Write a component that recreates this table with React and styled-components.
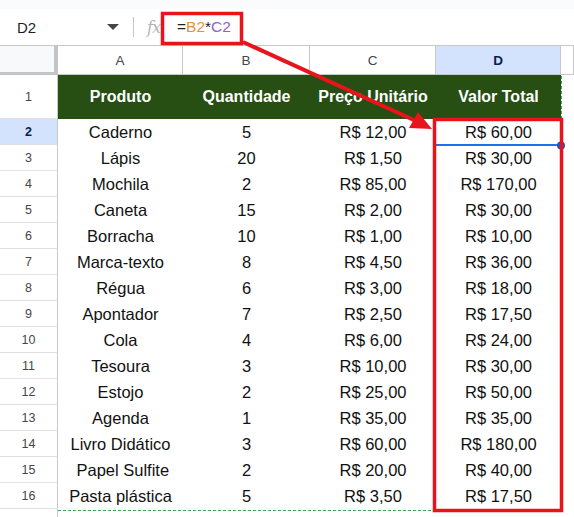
import React from "react";
import styled, { createGlobalStyle } from "styled-components";

const GlobalStyle = createGlobalStyle`
  html, body { margin: 0; padding: 0; background: #fff; }
  body { font-family: "Liberation Sans", Arial, sans-serif; overflow: hidden; }
`;

const rows = [
  ["Caderno", 5, "R$ 12,00", "R$ 60,00"],
  ["Lápis", 20, "R$ 1,50", "R$ 30,00"],
  ["Mochila", 2, "R$ 85,00", "R$ 170,00"],
  ["Caneta", 15, "R$ 2,00", "R$ 30,00"],
  ["Borracha", 10, "R$ 1,00", "R$ 10,00"],
  ["Marca-texto", 8, "R$ 4,50", "R$ 36,00"],
  ["Régua", 6, "R$ 3,00", "R$ 18,00"],
  ["Apontador", 7, "R$ 2,50", "R$ 17,50"],
  ["Cola", 4, "R$ 6,00", "R$ 24,00"],
  ["Tesoura", 3, "R$ 10,00", "R$ 30,00"],
  ["Estojo", 2, "R$ 25,00", "R$ 50,00"],
  ["Agenda", 1, "R$ 35,00", "R$ 35,00"],
  ["Livro Didático", 3, "R$ 60,00", "R$ 180,00"],
  [" Papel Sulfite", 2, "R$ 20,00", "R$ 40,00"],
  ["Pasta plástica", 5, "R$ 3,50", "R$ 17,50"],
];

const Page = styled.div`
  position: relative;
  width: 574px;
  height: 517px;
  overflow: hidden;
  background: #fff;
`;

const TopStrip = styled.div`
  height: 9px;
  background: #f9fbfd;
`;

const FormulaBar = styled.div`
  display: flex;
  align-items: center;
  height: 36px;
  border-bottom: 1px solid #c7c7c7;
  background: #fff;
`;

const NameBox = styled.div`
  width: 100px;
  padding-left: 17px;
  font-size: 15px;
  color: #1f1f1f;
`;

const Caret = styled.div`
  width: 0;
  height: 0;
  border-left: 6px solid transparent;
  border-right: 6px solid transparent;
  border-top: 6px solid #444746;
  margin-left: -10px;
`;

const Divider = styled.div`
  width: 1px;
  height: 20px;
  background: #c7c7c7;
  margin-left: 14px;
`;

const Fx = styled.div`
  margin-left: 13px;
  width: 16px;
  font-family: "DejaVu Serif", serif;
  font-style: italic;
  font-size: 16px;
  color: #b4b4b4;
  letter-spacing: -1px;
`;

const Formula = styled.div`
  margin-left: 14px;
  font-size: 15.5px;
  color: #1f1f1f;
`;

const Ref = styled.span`
  color: ${p => p.c};
`;

const Grid = styled.div`
  display: grid;
  grid-template-columns: 58px 125px 127px 126px 125px 1fr;
  align-items: start;
`;

const Corner = styled.div`
  height: 29px;
  background: #f8f9fa;
  border-right: 4px solid #c4c4c4;
  border-bottom: 3px solid #c4c4c4;
  box-sizing: border-box;
`;

const ColHead = styled.div`
  height: 29px;
  box-sizing: border-box;
  display: flex;
  align-items: center;
  justify-content: center;
  font-size: 13.5px;
  background: ${p => (p.active ? "#d3e3fd" : "#fff")};
  color: ${p => (p.active ? "#0b1f4a" : "#444746")};
  font-weight: ${p => (p.active ? "bold" : "normal")};
  border-right: 1px solid #c7c7c7;
  border-bottom: 1px solid #c7c7c7;
`;

const RowHead = styled.div`
  height: ${p => p.h || 26}px;
  box-sizing: border-box;
  display: flex;
  align-items: center;
  justify-content: center;
  font-size: 12.5px;
  background: ${p => (p.active ? "#d3e3fd" : "#fff")};
  color: ${p => (p.active ? "#0b1f4a" : "#444746")};
  font-weight: ${p => (p.active ? "bold" : "normal")};
  border-right: 1px solid #c7c7c7;
  border-bottom: 1px solid #e1e1e1;
`;

const HeadCell = styled.div`
  height: 44px;
  display: flex;
  align-items: center;
  justify-content: center;
  background: #274e13;
  color: #fff;
  font-weight: bold;
  font-size: 16px;
  white-space: nowrap;
`;

const Cell = styled.div`
  height: 26px;
  display: flex;
  align-items: center;
  justify-content: center;
  font-size: 16.5px;
  color: #111;
  white-space: pre;
`;

const Blank = styled.div`
  height: ${p => p.h || 26}px;
`;

const Overlay = styled.svg`
  position: absolute;
  left: 0;
  top: 0;
  pointer-events: none;
`;

export default function App() {
  return (
    <Page>
      <GlobalStyle />
      <TopStrip />
      <FormulaBar>
        <NameBox>D2</NameBox>
        <Caret />
        <Divider />
        <Fx>fx</Fx>
        <Formula>
          =<Ref c="#e69138">B2</Ref>*<Ref c="#8e63ce">C2</Ref>
        </Formula>
      </FormulaBar>
      <Grid>
        <Corner />
        <ColHead>A</ColHead>
        <ColHead>B</ColHead>
        <ColHead>C</ColHead>
        <ColHead active>D</ColHead>
        <ColHead />

        <RowHead h={44}>1</RowHead>
        <HeadCell>Produto</HeadCell>
        <HeadCell>Quantidade</HeadCell>
        <HeadCell>Preço Unitário</HeadCell>
        <HeadCell>Valor Total</HeadCell>
        <Blank h={44} />

        {rows.map((r, i) => (
          <React.Fragment key={i}>
            <RowHead active={i === 0}>{i + 2}</RowHead>
            <Cell>{r[0]}</Cell>
            <Cell>{r[1]}</Cell>
            <Cell>{r[2]}</Cell>
            <Cell>{r[3]}</Cell>
            <Blank />
          </React.Fragment>
        ))}
        <RowHead>17</RowHead>
      </Grid>

      <Overlay width="574" height="517">
        <polyline points="561.5,76 561.5,510.5 58,510.5" fill="none" stroke="#34a853" strokeDasharray="3 2" strokeWidth="1" />
        <line x1="436" y1="145" x2="560" y2="145" stroke="#1a73e8" strokeWidth="2" />
        <circle cx="561" cy="145.5" r="4" fill="#1a56c8" />
        <rect x="162.5" y="13.5" width="79" height="30" fill="none" stroke="#e8141c" strokeWidth="3.5" />
        <rect x="434.5" y="119.5" width="127" height="391" fill="none" stroke="#e8141c" strokeWidth="3.5" />
        <line x1="243" y1="42" x2="416" y2="121" stroke="#e8141c" strokeWidth="4" />
        <polygon points="432,129 409,128 418,112" fill="#e8141c" />
      </Overlay>
    </Page>
  );
}
